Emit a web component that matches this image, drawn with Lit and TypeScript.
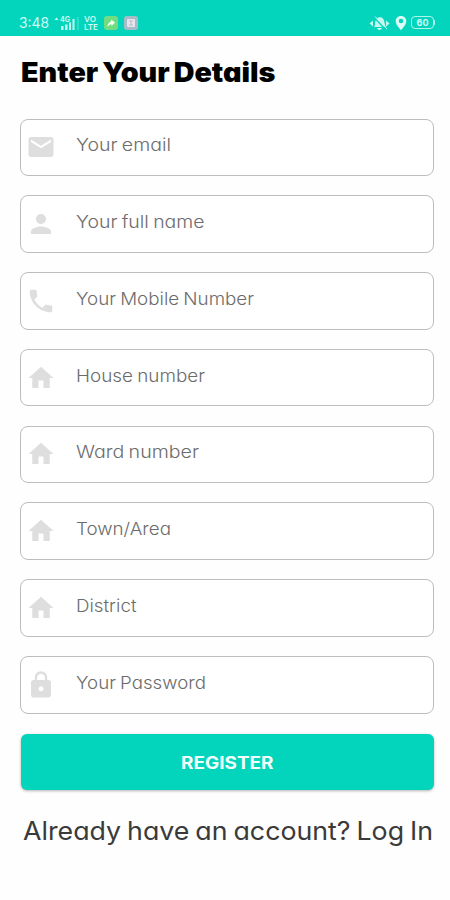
import { LitElement, html, css, svg } from "lit";
import { customElement, property } from "lit/decorators.js";

const ICONS = {
  mail: "M20 4H4c-1.1 0-1.99.9-1.99 2L2 18c0 1.1.9 2 2 2h16c1.1 0 2-.9 2-2V6c0-1.1-.9-2-2-2zm0 4l-8 5-8-5V6l8 5 8-5v2z",
  person: "M12 12c2.21 0 4-1.79 4-4s-1.79-4-4-4-4 1.79-4 4 1.79 4 4 4zm0 2c-2.67 0-8 1.34-8 4v2h16v-2c0-2.66-5.33-4-8-4z",
  phone: "M6.62 10.79c1.44 2.83 3.76 5.14 6.59 6.59l2.2-2.2c.27-.27.67-.36 1.02-.24 1.12.37 2.33.57 3.57.57.55 0 1 .45 1 1V20c0 .55-.45 1-1 1-9.39 0-17-7.61-17-17 0-.55.45-1 1-1h3.5c.55 0 1 .45 1 1 0 1.25.2 2.45.57 3.57.11.35.03.74-.25 1.02l-2.2 2.2z",
  home: "M10 20v-6h4v6h5v-8h3L12 3 2 12h3v8z",
  lock: "M18 8h-1V6c0-2.76-2.24-5-5-5S7 3.24 7 6v2H6c-1.1 0-2 .9-2 2v10c0 1.1.9 2 2 2h12c1.1 0 2-.9 2-2V10c0-1.1-.9-2-2-2zm-6 9c-1.1 0-2-.9-2-2s.9-2 2-2 2 .9 2 2-.9 2-2 2zm3.1-9H8.9V6c0-1.71 1.39-3.1 3.1-3.1 1.71 0 3.1 1.39 3.1 3.1v2z",
};

const FIELDS: { icon: keyof typeof ICONS; label: string; width: number }[] = [
  { icon: "mail", label: "Your email", width: 95 },
  { icon: "person", label: "Your full name", width: 128.5 },
  { icon: "phone", label: "Your Mobile Number", width: 178 },
  { icon: "home", label: "House number", width: 129 },
  { icon: "home", label: "Ward number", width: 123 },
  { icon: "home", label: "Town/Area", width: 95 },
  { icon: "home", label: "District", width: 60.5 },
  { icon: "lock", label: "Your Password", width: 130 },
];

/** A line of text whose letters are widened so that it sets to a given width. */
@customElement("wide-text")
class WideText extends LitElement {
  @property() text = "";
  @property({ type: Number }) width = 0;

  static styles = css`
    :host { display: block; }
    .box { display: block; }
    .line {
      display: inline-block;
      vertical-align: top;
      white-space: pre;
      word-spacing: -0.06em;
      transform-origin: 0 50%;
    }
  `;

  updated() {
    const line = this.renderRoot.querySelector<HTMLElement>(".line")!;
    line.style.transform = "none";
    const natural = line.getBoundingClientRect().width;
    line.style.transform = `scaleX(${this.width / natural})`;
  }

  render() {
    return html`<span class="box" style="width:${this.width}px"><span class="line">${this.text}</span></span>`;
  }
}

@customElement("status-bar")
class StatusBar extends LitElement {
  static styles = css`
    :host {
      display: flex;
      box-sizing: border-box;
      height: 35.5px;
      padding: 10px 15px 0 19px;
      background: #03d5bd;
      color: #d2fbf4;
      align-items: center;
    }
    .clock { width: 35px; font-size: 14px; }
    .signal { width: 26px; height: 16px; }
    .volte {
      margin-left: 4px;
      width: 20px;
      font-size: 8px;
      line-height: 8px;
      font-weight: 600;
    }
    .app { width: 14px; height: 14px; margin-right: 6px; }
    .bell { width: 21px; height: 16px; margin-left: auto; }
    .pin { width: 12px; height: 16px; margin: 0 4px 0 5px; }
    .battery {
      display: flex;
      align-items: center;
      justify-content: center;
      box-sizing: border-box;
      width: 23px;
      height: 13px;
      border: 1px solid #b0f5e9;
      border-radius: 4px;
      font-size: 9px;
      font-weight: 700;
    }
    .tip { width: 1px; height: 5px; background: #b0f5e9; }
    .mini { font-size: 7px; font-weight: 700; }
  `;

  render() {
    return html`
      <wide-text class="clock" text="3:48" width="30"></wide-text>
      <svg class="signal" viewBox="0 0 26 16" fill="#c5f9f0">
        <path d="M2.5 2.5l2 2.5H.5zM7 11h2.5v4H7zM11 9.5h2.5V15H11zM15 7.5h2V15h-2zM18.5 4h2v11h-2z" />
        <path d="M23.5 2h1v13h-1z" opacity=".45" />
        <text class="mini" x="6" y="7">4G</text>
      </svg>
      <div class="volte">
        <wide-text text="VO" width="12"></wide-text>
        <wide-text text="LTE" width="14"></wide-text>
      </div>
      <svg class="app" viewBox="0 0 14 14">
        <rect width="14" height="14" rx="3" fill="#71dc82" />
        <path d="M2.5 10.5c1.5-1 1.5-4 4.5-5V3.5l4 3-3.5 3.5V8.3c-2 0-3 2-5 2.2z" fill="#f4fff0" />
      </svg>
      <svg class="app" viewBox="0 0 14 14">
        <rect width="14" height="14" rx="3" fill="#a6bdc9" />
        <rect x="3" y="3" width="8" height="8" rx="1" fill="#e9e5ef" />
        <path d="M5 5h4M7 5v4M5 9h4" stroke="#b7bccb" fill="none" />
      </svg>
      <svg class="bell" viewBox="0 0 21 16" fill="#c5f9f0">
        <path d="M5 12c2-2 0-6 3-8.5C10 1.500 12.5 2 14 3.5c2 2.5 1 6 3 8.5zM8 13h5c-.5 2.500-4.500 2.500-5 0z" />
        <path d="M5 2.5L17 15" stroke="#03d5bd" stroke-width="1.3" />
        <path d="M6 1.500L18 14" stroke="#c5f9f0" stroke-width="1" />
        <path d="M4 5.500L.5 8.500 4 11.500zM17 5.500L20.500 8.500 17 11.500z" />
      </svg>
      <svg class="pin" viewBox="0 0 12 16">
        <path d="M6 1C3 1 .7 3.200.7 6.200.7 9.800 6 15.200 6 15.200s5.300-5.400 5.300-9C11.300 3.200 9 1 6 1zm0 7.300a2.300 2.300 0 110-4.600 2.300 2.300 0 010 4.600z" fill="#dcfcf6" />
      </svg>
      <div class="battery">60</div>
      <div class="tip"></div>
    `;
  }
}

@customElement("app-root")
class AppRoot extends LitElement {
  static styles = css`
    :host {
      display: block;
      height: 900px;
      overflow: hidden;
      background: #fefefe;
      font-family: Inter, "Open Sans", sans-serif;
      font-feature-settings: "cv11" 1;
    }
    main { display: flex; flex-direction: column; padding: 0 16px 0 20px; }
    .title {
      margin: 18.5px 0 0 0.5px;
      height: 64.5px;
      line-height: 36px;
      font-size: 26.5px;
      font-weight: 900;
      color: #000;
    }
    .fields { display: flex; flex-direction: column; gap: 19.3px; }
    .field {
      display: flex;
      align-items: center;
      box-sizing: border-box;
      height: 57.5px;
      padding-left: 5px;
      border: 1px solid #bdbdbd;
      border-radius: 8px;
      background: #fff;
    }
    .icon { width: 30px; height: 30px; fill: #dedede; }
    .label {
      margin: 0 0 4px 19.5px;
      font-size: 17.5px;
      line-height: 24px;
      font-weight: 300;
      color: #6c6c6c;
    }
    .register {
      display: flex;
      align-items: center;
      justify-content: center;
      width: 413px;
      height: 56.5px;
      margin: 20px 0 0 1px;
      padding: 2px 0 0;
      border: 0;
      border-radius: 6px;
      background: #03d5bd;
      box-shadow: 0 1px 3px rgba(0, 0, 0, 0.3);
      color: #f2fffc;
      font: 700 17px Inter, "Open Sans", sans-serif;
      text-align: left;
    }
    .login {
      margin: 23px 0 0 3px;
      font-size: 25.5px;
      line-height: 36px;
      color: #3a3a3a;
    }
  `;

  render() {
    return html`
      <status-bar></status-bar>
      <main>
        <wide-text class="title" text="Enter Your Details" width="254.5"></wide-text>
        <div class="fields">
          ${FIELDS.map(
            (f) => html`
              <div class="field">
                <svg class="icon" viewBox="0 0 24 24">${svg`<path d=${ICONS[f.icon]} />`}</svg>
                <wide-text class="label" .text=${f.label} .width=${f.width}></wide-text>
              </div>
            `
          )}
        </div>
        <button class="register"><wide-text text="REGISTER" width="92.5"></wide-text></button>
        <wide-text class="login" text="Already have an account? Log In" width="410"></wide-text>
      </main>
    `;
  }
}
